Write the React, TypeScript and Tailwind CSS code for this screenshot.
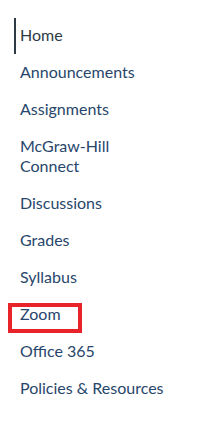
const items = [
  { label: "Home", active: true },
  { label: "Announcements" },
  { label: "Assignments" },
  { label: "McGraw-Hill Connect" },
  { label: "Discussions" },
  { label: "Grades" },
  { label: "Syllabus" },
  { label: "Zoom", outlined: true },
  { label: "Office 365" },
  { label: "Policies & Resources" },
];

export default function App() {
  return (
    <div
      className="w-[212px] h-[428px] overflow-hidden bg-white"
      style={{ fontFamily: "Lato, 'Noto Sans', sans-serif" }}
    >
      {/* term label, scrolled mostly out of view */}
      <div className="h-[18px] overflow-hidden">
        <div className="-mt-[12px] pl-[25px] text-[12px] leading-[15px] text-[#6b7780]">
          20/FA
        </div>
      </div>
      <ul className="pl-[14px] flex flex-col gap-[1px]">
        {items.map((item) => (
          <li key={item.label} className="relative">
            <a
              className={`block w-[153px] pt-[7px] pb-[9px] pl-[4px] text-[16px] leading-[20px] border-l-2 ${
                item.active
                  ? "border-[#2d3b45] text-[#2d3b45]"
                  : "border-transparent text-[#28466b]"
              }`}
            >
              {item.label}
            </a>
            {item.outlined && (
              <div className="absolute left-[-6px] top-[6px] w-[74px] h-[30px] border-4 border-[#e8232a]" />
            )}
          </li>
        ))}
      </ul>
    </div>
  );
}
